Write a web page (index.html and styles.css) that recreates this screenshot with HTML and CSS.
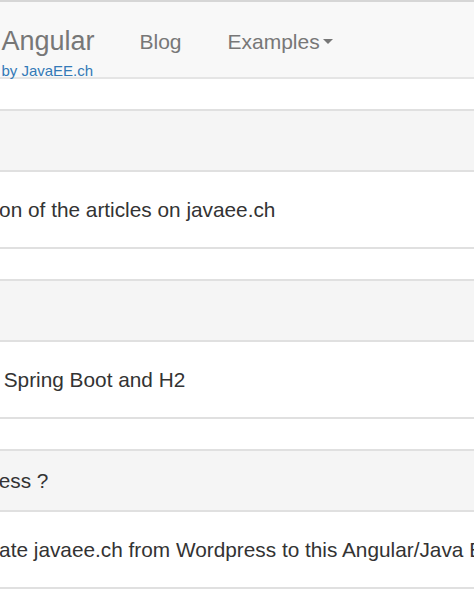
FILE: index.html
```html
<!DOCTYPE html>
<html lang="en">
<head>
<meta charset="utf-8">
<title>Angular by JavaEE.ch</title>
<link rel="stylesheet" href="styles.css">
</head>
<body>
<nav class="navbar">
  <div class="navbar-inner">
    <a class="brand" href="#">
      <span class="brand-title">Angular</span>
      <span class="brand-sub">by JavaEE.ch</span>
    </a>
    <ul class="nav">
      <li><a class="nav-link" href="#">Blog</a></li>
      <li><a class="nav-link" href="#">Examples<span class="caret"></span></a></li>
    </ul>
  </div>
</nav>
<main class="content">
  <section class="panel">
    <div class="panel-heading">About</div>
    <div class="panel-body"><p class="line">An Angular collection of the articles on javaee.ch</p></div>
  </section>
  <section class="panel">
    <div class="panel-heading">Technology</div>
    <div class="panel-body"><p class="line">The backend uses Spring Boot and H2</p></div>
  </section>
  <section class="panel">
    <div class="panel-heading">Why leave Wordpress ?</div>
    <div class="panel-body"><p class="line">The plan is to migrate javaee.ch from Wordpress to this Angular/Java EE stack</p></div>
  </section>
</main>
</body>
</html>
```

FILE: styles.css
```css
html, body {
  margin: 0;
  padding: 0;
  overflow: hidden;
  background: #ffffff;
}

body {
  font-family: "Liberation Sans", Arial, Helvetica, sans-serif;
  color: #333333;
}

.navbar {
  background: #f8f8f8;
  border-top: 2px solid #d6d6d6;
  border-bottom: 2px solid #e5e5e5;
  height: 75px;
}

.navbar-inner {
  display: flex;
  margin-left: -21.1px;
  height: 75px;
}

.brand {
  display: flex;
  flex-direction: column;
  padding: 23.6px 22.5px 0;
  text-decoration: none;
  color: #777777;
  white-space: nowrap;
}

.brand-title {
  font-size: 27px;
  line-height: 30px;
}

.brand-sub {
  font-size: 15px;
  line-height: 15px;
  margin-top: 7.7px;
  color: #337ab7;
}

.nav {
  display: flex;
  list-style: none;
  margin: 0;
  padding: 0;
}

.nav-link {
  display: block;
  padding: 24.7px 23.5px 0 22.5px;
  font-size: 21px;
  line-height: 30px;
  color: #777777;
  text-decoration: none;
  white-space: nowrap;
}

.caret {
  display: inline-block;
  width: 0;
  height: 0;
  margin-left: 3px;
  vertical-align: middle;
  border-top: 5.5px solid #777777;
  border-left: 5.5px solid transparent;
  border-right: 5.5px solid transparent;
  position: relative;
  top: -2px;
}

.content {
  margin: 30px 0 0 -196.5px;
  width: 1000px;
}

.panel {
  border: 2px solid #e0e0e0;
  border-radius: 6px;
  margin-bottom: 30px;
  background: #ffffff;
}

.panel-heading {
  background: #f5f5f5;
  border-bottom: 2px solid #e0e0e0;
  padding: 14.5px 22.5px;
  font-size: 20.8px;
  line-height: 30px;
  white-space: nowrap;
}

.panel-body {
  padding: 22.5px;
}

.line {
  margin: 0;
  font-size: 20.8px;
  line-height: 30px;
  white-space: nowrap;
}
```
